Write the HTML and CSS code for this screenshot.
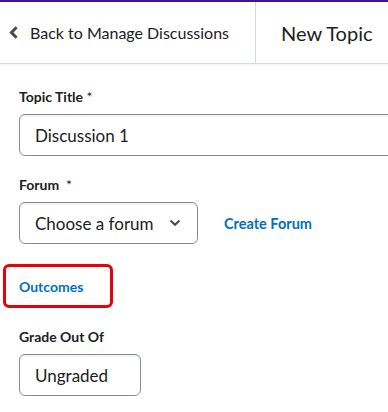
FILE: index.html
```html
<!DOCTYPE html>
<html>
  <head>
    <title>New Topic</title>
    <link rel="stylesheet" href="styles.css">
  </head>
  <body>
    <div class="topbar"></div>
    <div class="header">
      <a class="back" href="#">
        <svg class="chev" width="9" height="13" viewBox="0 0 9 13"><path d="M7.6 1.2 L2.4 6.5 L7.6 11.8" fill="none" stroke="#494c4e" stroke-width="3"/></svg>
        <span>Back to Manage Discussions</span>
      </a>
      <div class="title">New Topic</div>
    </div>
    <div class="form">
      <div class="field">
        <label>Topic Title <span class="req">*</span></label>
        <div class="input wide">Discussion 1</div>
      </div>
      <div class="field">
        <label>Forum &nbsp;<span class="req">*</span></label>
        <div class="row">
          <div class="input select">
            <span>Choose a forum</span>
            <svg width="12" height="8" viewBox="0 0 12 8"><path d="M1.5 1.5 L6 5.8 L10.5 1.5" fill="none" stroke="#494c4e" stroke-width="2"/></svg>
          </div>
          <a class="link create" href="#">Create Forum</a>
        </div>
      </div>
      <div class="outcomes">
        <a class="link" href="#">Outcomes</a>
      </div>
      <div class="field">
        <label>Grade Out Of</label>
        <div class="input small">Ungraded</div>
      </div>
    </div>
  </body>
</html>
```
FILE: styles.css
```css
body {
  margin: 0;
  background: #ffffff;
  font-family: Lato, "Open Sans", sans-serif;
  color: #202122;
  overflow: hidden;
}

.topbar {
  height: 2px;
  background: #43128e;
}

.header {
  display: flex;
  height: 61px;
  border-bottom: 1px solid #d3d9e3;
  box-shadow: 0 2px 0 #f6f7f8;
}

.back {
  display: flex;
  align-items: center;
  width: 256px;
  padding-left: 9px;
  box-sizing: border-box;
  border-right: 1px solid #d3d9e3;
  color: #202122;
  text-decoration: none;
  font-size: 16px;
}

.chev {
  margin-right: 12px;
}

.title {
  display: flex;
  align-items: center;
  padding-left: 25px;
  font-size: 20px;
  white-space: nowrap;
}

.form {
  padding: 24px 0 0 19px;
  overflow: hidden;
}

.field label {
  display: block;
  font-size: 14px;
  font-weight: bold;
  line-height: 18px;
  margin-bottom: 8px;
}

.req {
  font-weight: normal;
}

.field {
  margin-bottom: 20px;
}

.input {
  box-sizing: border-box;
  height: 42px;
  border: 1px solid #868c8f;
  border-radius: 6px;
  box-shadow: inset 0 2px 0 0 rgba(185, 194, 208, 0.2);
  padding: 0 15px;
  display: flex;
  align-items: center;
  font-size: 17px;
  color: #202122;
}

.wide {
  width: 380px;
}

.row {
  display: flex;
  align-items: center;
}

.select {
  width: 179px;
  justify-content: space-between;
  padding-right: 16px;
}

.link {
  color: #006fbf;
  font-weight: bold;
  font-size: 14px;
  text-decoration: none;
}

.create {
  margin-left: 26px;
  font-size: 14.5px;
}

.outcomes {
  width: 110px;
  height: 44px;
  box-sizing: border-box;
  border: 3px solid #e8000b;
  border-radius: 6px;
  margin-left: -16px;
  padding-left: 13px;
  display: flex;
  align-items: center;
  margin-bottom: 20px;
}

.small {
  width: 122px;
}
```
